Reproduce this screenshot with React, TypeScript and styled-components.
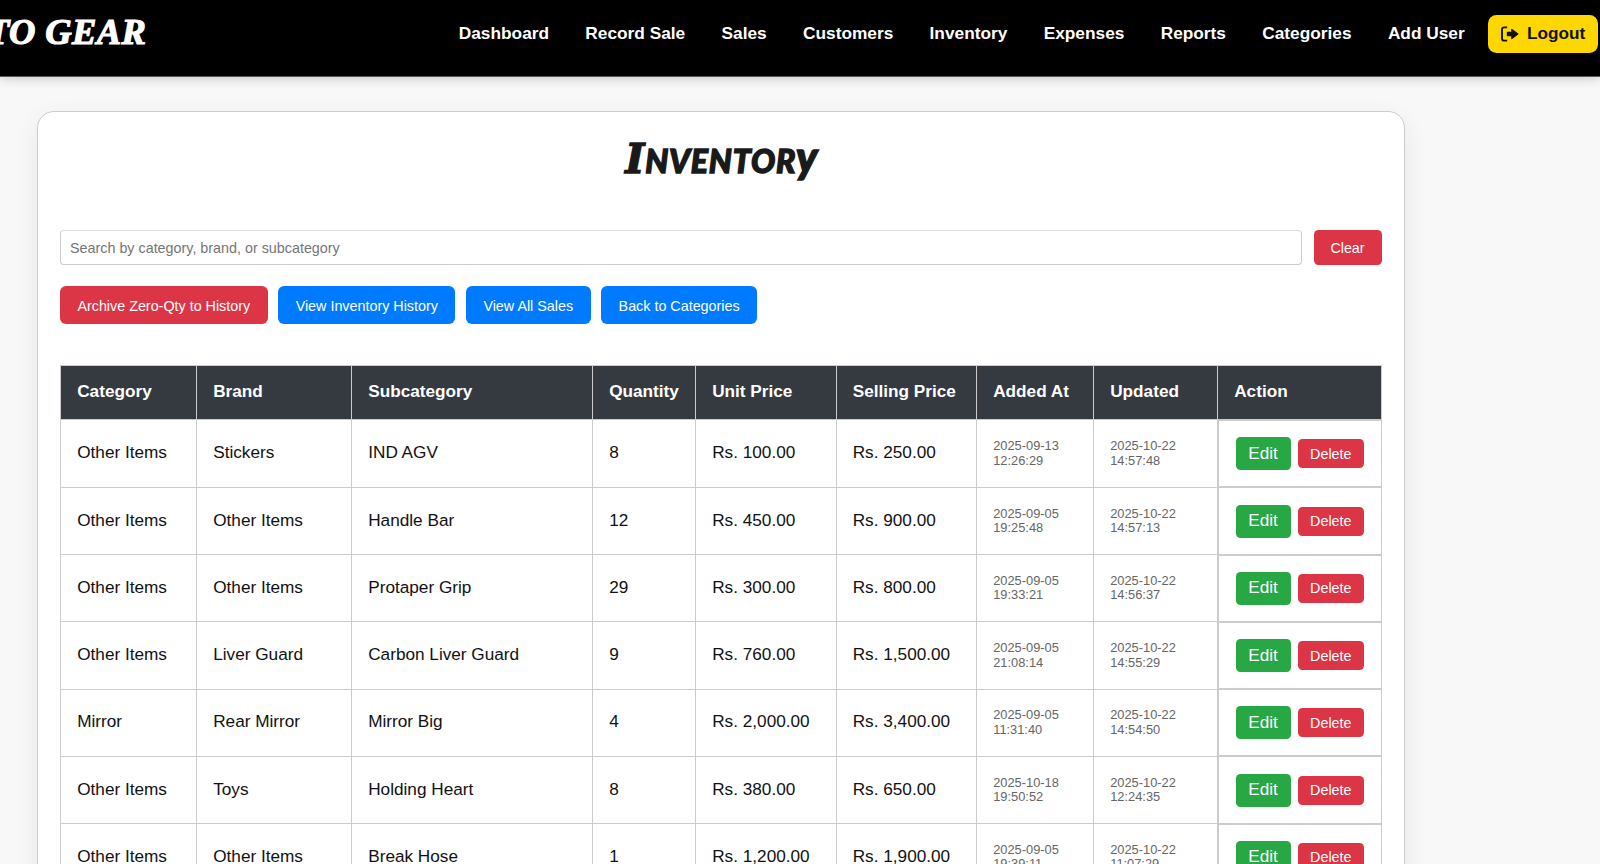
import React from "react";
import styled, { createGlobalStyle } from "styled-components";

const GlobalStyle = createGlobalStyle`
  * { box-sizing: border-box; }
  html, body { height: 100%; overflow: hidden; }
  body {
    margin: 0;
    background: #f8f8f8;
    color: #111;
    font-family: "Liberation Sans", Arial, sans-serif;
    font-size: 17.2px;
  }
  button, input { font-family: inherit; font-size: 14.33px; }
`;

const Page = styled.div`
  height: 864px;
  overflow: hidden;
`;

const Header = styled.header`
  display: flex;
  justify-content: space-between;
  align-items: flex-start;
  height: 77px;
  padding: 15px 2px 0 0;
  background: #000;
  border-bottom: 1px solid #5a5a5a;
  box-shadow: 0 2px 10px rgba(0, 0, 0, 0.18);
`;

const Brand = styled.div`
  margin: -2px 0 0 -13px;
  color: #fff;
  font-family: "Liberation Serif", "Times New Roman", serif;
  font-weight: 700;
  font-style: italic;
  font-size: 36.5px;
  line-height: 38px;
  letter-spacing: 0.4px;
  white-space: nowrap;
  -webkit-text-stroke: 1.2px #fff;
`;

const Nav = styled.nav`
  display: flex;
  align-items: center;
  height: 37.5px;
  gap: 36.3px;
`;

const NavLink = styled.a`
  color: #fff;
  font-size: 17.3px;
  font-weight: 700;
  white-space: nowrap;
`;

const Logout = styled.button`
  display: flex;
  align-items: center;
  justify-content: center;
  gap: 8px;
  width: 110px;
  height: 37.5px;
  margin-left: -13px;
  padding: 0;
  border: 0;
  border-radius: 8.5px;
  background: #ffd700;
  color: #111;
  font-size: 17.2px;
  font-weight: 700;
`;

const Card = styled.main`
  width: 1367.5px;
  height: 900px;
  margin: 34px 0 0 37px;
  padding: 0 22px;
  background: #fff;
  border: 1px solid #ccc;
  border-radius: 17px;
  box-shadow: 0 8px 25px rgba(0, 0, 0, 0.08);
`;

const Title = styled.h1`
  height: 117.5px;
  margin: 0;
  padding: 20.5px 0 0 2px;
  color: #1a1a1a;
  text-align: center;
  font-family: Lato, sans-serif;
  font-weight: 900;
  font-style: italic;
  font-size: 46px;
  line-height: 46px;
  letter-spacing: 0.8px;
  font-variant: small-caps;
  -webkit-text-stroke: 1.4px #1a1a1a;
  &::first-letter {
    font-family: "DejaVu Serif", serif;
    font-size: 41px;
  }
`;

const Swash = styled.span`
  font-variant: normal;
  font-size: 43px;
`;

const SearchRow = styled.div`
  display: flex;
  gap: 11.5px;
  height: 35.5px;
`;

const SearchInput = styled.input`
  flex: 1;
  padding: 1px 9px 0;
  border: 1px solid #ccc;
  border-top-color: #ddd;
  border-radius: 4px;
  background: #fff;
  outline: none;
  &::placeholder { color: #757575; opacity: 1; }
`;

const Button = styled.button<{ $tone: "red" | "blue" | "green" }>`
  padding: 1px 17.4px 0;
  border: 0;
  border-radius: 6px;
  color: #fff;
  white-space: nowrap;
  background: ${({ $tone }) => ({ red: "#dc3545", blue: "#007bff", green: "#28a745" })[$tone]};
`;

const ClearButton = styled(Button)`
  width: 68px;
  padding: 1px 0 0;
  border-radius: 4.5px;
`;

const Toolbar = styled.div`
  display: flex;
  gap: 10.7px;
  height: 38.4px;
  margin: 21px 0 41px;
`;

const Table = styled.table`
  width: 1321px;
  table-layout: fixed;
  border-collapse: collapse;
`;

const Th = styled.th`
  height: 53.8px;
  padding: 0 16.2px 1.6px;
  border: 1px solid #ccc;
  background: #343a40;
  color: #fff;
  text-align: left;
  white-space: nowrap;
`;

const Td = styled.td`
  height: 67.25px;
  padding: 0 16.2px 1.8px;
  border: 1px solid #ccc;
  white-space: nowrap;
`;

const Stamp = styled(Td)`
  padding-bottom: 0;
  color: #666;
  font-size: 12.85px;
  line-height: 14.4px;
  white-space: normal;
`;

const ActionTd = styled.td`
  display: flex;
  align-items: center;
  gap: 7px;
  height: 67.25px;
  padding: 0 16.5px;
  border: 1px solid #ccc;
`;

const EditButton = styled(Button)`
  width: 55.5px;
  height: 33px;
  padding: 0 0 1px;
  border-radius: 4.5px;
  font-size: 17.2px;
`;

const DeleteButton = styled(Button)`
  width: 67px;
  height: 29px;
  padding: 0;
  border-radius: 4.5px;
`;

const LogoutIcon = () => (
  <svg width="18" height="16" viewBox="0 0 18 16" fill="none">
    <path d="M6.2 1.4H3.2Q1 1.4 1 3.6V12.4Q1 14.6 3.2 14.6H6.2" stroke="#111" strokeWidth="1.9" />
    <path
      d="M6.6 5.7H10.2V3.4Q10.2 2.2 11.2 3L17.2 7.4Q17.9 8 17.2 8.6L11.2 13Q10.2 13.8 10.2 12.6V10.3H6.6Q5.8 10.3 5.8 9.5V6.5Q5.8 5.7 6.6 5.7Z"
      fill="#111"
    />
  </svg>
);

const links = ["Dashboard", "Record Sale", "Sales", "Customers", "Inventory", "Expenses", "Reports", "Categories", "Add User"];

const columns: [string, number][] = [
  ["Category", 136],
  ["Brand", 155],
  ["Subcategory", 241],
  ["Quantity", 103],
  ["Unit Price", 140.5],
  ["Selling Price", 140.5],
  ["Added At", 117],
  ["Updated", 124],
  ["Action", 164],
];

const rows = [
  ["Other Items", "Stickers", "IND AGV", "8", "100.00", "250.00", "2025-09-13 12:26:29", "2025-10-22 14:57:48"],
  ["Other Items", "Other Items", "Handle Bar", "12", "450.00", "900.00", "2025-09-05 19:25:48", "2025-10-22 14:57:13"],
  ["Other Items", "Other Items", "Protaper Grip", "29", "300.00", "800.00", "2025-09-05 19:33:21", "2025-10-22 14:56:37"],
  ["Other Items", "Liver Guard", "Carbon Liver Guard", "9", "760.00", "1,500.00", "2025-09-05 21:08:14", "2025-10-22 14:55:29"],
  ["Mirror", "Rear Mirror", "Mirror Big", "4", "2,000.00", "3,400.00", "2025-09-05 11:31:40", "2025-10-22 14:54:50"],
  ["Other Items", "Toys", "Holding Heart", "8", "380.00", "650.00", "2025-10-18 19:50:52", "2025-10-22 12:24:35"],
  ["Other Items", "Other Items", "Break Hose", "1", "1,200.00", "1,900.00", "2025-09-05 19:39:11", "2025-10-22 11:07:29"],
];

export default function App() {
  return (
    <Page>
      <GlobalStyle />
      <Header>
        <Brand>TO GEAR</Brand>
        <Nav>
          {links.map((label) => (
            <NavLink key={label}>{label}</NavLink>
          ))}
          <Logout>
            <LogoutIcon />
            Logout
          </Logout>
        </Nav>
      </Header>
      <Card>
        <Title>
          Inventor<Swash>y</Swash>
        </Title>
        <SearchRow>
          <SearchInput placeholder="Search by category, brand, or subcategory" />
          <ClearButton $tone="red">Clear</ClearButton>
        </SearchRow>
        <Toolbar>
          <Button $tone="red">Archive Zero-Qty to History</Button>
          <Button $tone="blue">View Inventory History</Button>
          <Button $tone="blue">View All Sales</Button>
          <Button $tone="blue">Back to Categories</Button>
        </Toolbar>
        <Table>
          <colgroup>
            {columns.map(([name, width]) => (
              <col key={name} width={width} />
            ))}
          </colgroup>
          <thead>
            <tr>
              {columns.map(([name]) => (
                <Th key={name}>{name}</Th>
              ))}
            </tr>
          </thead>
          <tbody>
            {rows.map(([category, brand, sub, qty, unit, selling, added, updated]) => (
              <tr key={added}>
                <Td>{category}</Td>
                <Td>{brand}</Td>
                <Td>{sub}</Td>
                <Td>{qty}</Td>
                <Td>Rs. {unit}</Td>
                <Td>Rs. {selling}</Td>
                <Stamp>{added}</Stamp>
                <Stamp>{updated}</Stamp>
                <ActionTd>
                  <EditButton $tone="green">Edit</EditButton>
                  <DeleteButton $tone="red">Delete</DeleteButton>
                </ActionTd>
              </tr>
            ))}
          </tbody>
        </Table>
      </Card>
    </Page>
  );
}
